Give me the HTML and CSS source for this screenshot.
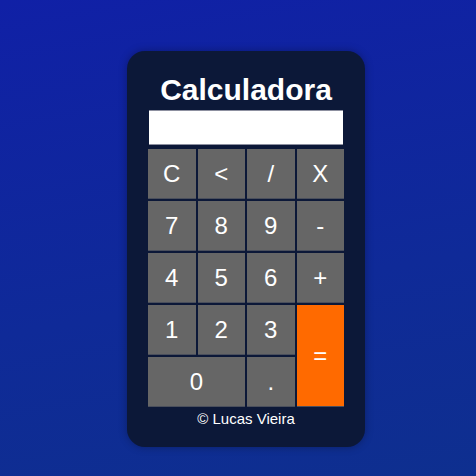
FILE: index.html
```html
<!DOCTYPE html>
<html lang="pt">
<head>
<meta charset="utf-8">
<title>Calculadora</title>
<link rel="stylesheet" href="styles.css">
</head>
<body>
<main class="calc">
  <h1 class="title">Calculadora</h1>
  <div class="display"></div>
  <div class="keys">
    <button class="key">C</button>
    <button class="key">&lt;</button>
    <button class="key">/</button>
    <button class="key">X</button>
    <button class="key">7</button>
    <button class="key">8</button>
    <button class="key">9</button>
    <button class="key">-</button>
    <button class="key">4</button>
    <button class="key">5</button>
    <button class="key">6</button>
    <button class="key">+</button>
    <button class="key">1</button>
    <button class="key">2</button>
    <button class="key">3</button>
    <button class="key key-eq">=</button>
    <button class="key key-zero">0</button>
    <button class="key">.</button>
  </div>
  <p class="footer">© Lucas Vieira</p>
</main>
</body>
</html>
```
FILE: styles.css
```css
html, body {
  margin: 0;
  height: 100%;
}
body {
  background: linear-gradient(170deg, #1020a6 0%, #0f2a98 60%, #0e2f8f 100%);
  font-family: "Liberation Sans", Arial, sans-serif;
  display: flex;
  justify-content: center;
  align-items: flex-start;
  padding: 51px 0 0 16px;
  box-sizing: border-box;
}
.calc {
  width: 196px;
  padding: 21px 21px 20px;
  background: #0c1838;
  border-radius: 18px;
  box-shadow: 0 0 8px rgba(0, 0, 0, 0.3);
  display: flex;
  flex-direction: column;
  align-items: center;
}
.title {
  margin: 0;
  color: #fff;
  font-size: 30px;
  font-weight: bold;
  line-height: 35px;
}
.display {
  flex-shrink: 0;
  margin-top: 3px;
  width: 194px;
  height: 33px;
  background: #fff;
  border-top: 1px solid #8d90a0;
  border-bottom: 1px solid #8d90a0;
}
.keys {
  flex-shrink: 0;
  margin-top: 4px;
  width: 196px;
  display: grid;
  grid-template-columns: repeat(4, 1fr);
  grid-auto-rows: 50px;
  gap: 2px;
}
.key {
  border: none;
  margin: 0;
  padding: 0;
  background: #666666;
  color: #fff;
  font-family: "Liberation Sans", Arial, sans-serif;
  font-size: 24px;
  box-shadow: inset 0 -1px 0 #4a4f5c;
}
.key-eq {
  grid-column: 4;
  grid-row: 4 / span 2;
  background: #ff6a00;
}
.key-zero {
  grid-column: 1 / span 2;
}
.footer {
  margin: 3px 0 0;
  color: #fff;
  font-size: 15px;
  line-height: 17px;
}
```
